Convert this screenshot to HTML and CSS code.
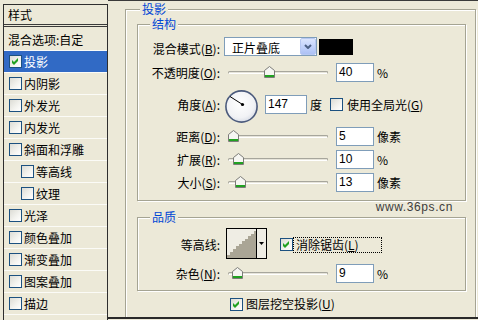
FILE: index.html
```html
<!DOCTYPE html>
<html lang="zh-CN">
<head>
<meta charset="utf-8">
<title>图层样式</title>
<link rel="stylesheet" href="styles.css">
</head>
<body>
<div class="dialog">
  <div class="styles">
    <div class="styles-head">样式</div>
    <div class="item item-blend">混合选项:自定</div>
    <div class="item selected"><span class="cb"><svg width="11" height="11" viewBox="0 0 11 11"><polygon points="2,4 4,6 8,2 8,5 4,9 2,7" fill="#21a121"/></svg></span><span>投影</span></div>
    <div class="item"><span class="cb"></span><span>内阴影</span></div>
    <div class="item"><span class="cb"></span><span>外发光</span></div>
    <div class="item"><span class="cb"></span><span>内发光</span></div>
    <div class="item"><span class="cb"></span><span>斜面和浮雕</span></div>
    <div class="item sub"><span class="cb"></span><span>等高线</span></div>
    <div class="item sub"><span class="cb"></span><span>纹理</span></div>
    <div class="item"><span class="cb"></span><span>光泽</span></div>
    <div class="item"><span class="cb"></span><span>颜色叠加</span></div>
    <div class="item"><span class="cb"></span><span>渐变叠加</span></div>
    <div class="item"><span class="cb"></span><span>图案叠加</span></div>
    <div class="item"><span class="cb"></span><span>描边</span></div>
  </div>

  <div class="main">
    <fieldset class="group outer">
      <legend>投影</legend>

      <fieldset class="group inner struct">
        <legend>结构</legend>

        <div class="row r-blend">
          <label class="lbl">混合模式(<u>B</u>):</label>
          <div class="ctrls">
            <div class="select"><span class="sel-text">正片叠底</span><span class="sel-btn"><svg width="8" height="5" viewBox="0 0 8 5"><polyline points="1,1 4,4 7,1" fill="none" stroke="#4d6185" stroke-width="2"/></svg></span></div>
            <div class="swatch"></div>
          </div>
        </div>

        <div class="row r-opacity">
          <label class="lbl">不透明度(<u>O</u>):</label>
          <div class="ctrls">
            <div class="slider"><div class="track"></div><svg class="thumb" style="left:40px" width="11" height="12" viewBox="0 0 11 12"><path d="M0.5 4.5 L5.5 0.5 L10.5 4.5 L10.5 11.5 L0.5 11.5 Z" fill="#f6f6f2" stroke="#7c7c78"/><rect x="1" y="9" width="9" height="2" fill="#21a121"/></svg></div>
            <div class="num">40</div><span class="unit">%</span>
          </div>
        </div>

        <div class="row r-angle">
          <label class="lbl">角度(<u>A</u>):</label>
          <div class="ctrls">
            <svg class="dial" width="33" height="33" viewBox="0 0 33 33">
              <defs><radialGradient id="dg" cx="45%" cy="40%" r="65%"><stop offset="0" stop-color="#ffffff"/><stop offset="0.7" stop-color="#f1f2f5"/><stop offset="1" stop-color="#d3d8e3"/></radialGradient></defs>
              <circle cx="16.5" cy="16.5" r="15.6" fill="url(#dg)" stroke="#4b5a7c" stroke-width="1.6"/>
              <line x1="17.5" y1="14.5" x2="5" y2="6.5" stroke="#000" stroke-width="1"/>
              <circle cx="17.5" cy="14.5" r="1.6" fill="#000"/>
            </svg>
            <div class="angle-rest">
              <div class="num wide">147</div><span class="unit">度</span>
              <span class="cb global"></span><span class="cb-text">使用全局光(<u>G</u>)</span>
            </div>
          </div>
        </div>

        <div class="row">
          <label class="lbl">距离(<u>D</u>):</label>
          <div class="ctrls">
            <div class="slider"><div class="track"></div><svg class="thumb" style="left:4px" width="11" height="12" viewBox="0 0 11 12"><path d="M0.5 4.5 L5.5 0.5 L10.5 4.5 L10.5 11.5 L0.5 11.5 Z" fill="#f6f6f2" stroke="#7c7c78"/><rect x="1" y="9" width="9" height="2" fill="#21a121"/></svg></div>
            <div class="num">5</div><span class="unit">像素</span>
          </div>
        </div>

        <div class="row">
          <label class="lbl">扩展(<u>R</u>):</label>
          <div class="ctrls">
            <div class="slider"><div class="track"></div><svg class="thumb" style="left:9px" width="11" height="12" viewBox="0 0 11 12"><path d="M0.5 4.5 L5.5 0.5 L10.5 4.5 L10.5 11.5 L0.5 11.5 Z" fill="#f6f6f2" stroke="#7c7c78"/><rect x="1" y="9" width="9" height="2" fill="#21a121"/></svg></div>
            <div class="num">10</div><span class="unit">%</span>
          </div>
        </div>

        <div class="row">
          <label class="lbl">大小(<u>S</u>):</label>
          <div class="ctrls">
            <div class="slider"><div class="track"></div><svg class="thumb" style="left:11px" width="11" height="12" viewBox="0 0 11 12"><path d="M0.5 4.5 L5.5 0.5 L10.5 4.5 L10.5 11.5 L0.5 11.5 Z" fill="#f6f6f2" stroke="#7c7c78"/><rect x="1" y="9" width="9" height="2" fill="#21a121"/></svg></div>
            <div class="num">13</div><span class="unit">像素</span>
          </div>
        </div>
      </fieldset>

      <fieldset class="group inner quality">
        <legend>品质</legend>

        <div class="row r-contour">
          <label class="lbl">等高线:</label>
          <div class="ctrls">
            <div class="contour">
              <svg class="cpreview" width="29" height="29" viewBox="0 0 29 29"><polygon points="0,29 0,26 3,26 3,23 6,23 6,20 9,20 9,17 12,17 12,15 15,15 15,12 18,12 18,10 21,10 21,7 24,7 24,5 27,5 27,2 29,2 29,29" fill="#aaa595"/></svg>
              <span class="cbtn"><svg width="5" height="3" viewBox="0 0 5 3"><path d="M0 0H5L2.5 3Z" fill="#000"/></svg></span>
            </div>
            <span class="cb aa"><svg width="11" height="11" viewBox="0 0 11 11"><polygon points="2,4 4,6 8,2 8,5 4,9 2,7" fill="#21a121"/></svg></span>
            <span class="focus">消除锯齿(<u>L</u>)</span>
          </div>
        </div>

        <div class="row r-noise">
          <label class="lbl">杂色(<u>N</u>):</label>
          <div class="ctrls">
            <div class="slider"><div class="track"></div><svg class="thumb" style="left:8px" width="11" height="12" viewBox="0 0 11 12"><path d="M0.5 4.5 L5.5 0.5 L10.5 4.5 L10.5 11.5 L0.5 11.5 Z" fill="#f6f6f2" stroke="#7c7c78"/><rect x="1" y="9" width="9" height="2" fill="#21a121"/></svg></div>
            <div class="num">9</div><span class="unit">%</span>
          </div>
        </div>
      </fieldset>

      <div class="knock">
        <span class="cb"><svg width="11" height="11" viewBox="0 0 11 11"><polygon points="2,4 4,6 8,2 8,5 4,9 2,7" fill="#21a121"/></svg></span>
        <span class="cb-text">图层挖空投影(<u>U</u>)</span>
      </div>
    </fieldset>

    <div class="watermark">www.36ps.cn</div>
  </div>
</div>
</body>
</html>
```

FILE: styles.css
```css
html, body {
  margin: 0;
  padding: 0;
}
body {
  width: 478px;
  height: 320px;
  overflow: hidden;
  background: #ece9d8;
  color: #000;
  font: 12px "Noto Sans CJK SC", "Noto Sans", sans-serif;
}
u { text-decoration: underline; text-underline-offset: 1px; }

.dialog {
  display: flex;
  width: 478px;
  height: 320px;
}

/* ---------- left style list ---------- */
.styles {
  flex: none;
  width: 105px;
  height: 316px;
  box-sizing: border-box;
  margin: 4px 0 0 3px;
  border: 1px solid #2e2e2e;
  border-bottom: 0;
}
.styles-head {
  height: 19px;
  line-height: 19px;
  padding-left: 4px;
  border-bottom: 3px double #3a3a3a;
}
.item {
  display: flex;
  align-items: center;
  gap: 2px;
  height: 21px;
  line-height: 21px;
  padding-left: 5px;
  border-bottom: 1px solid #fbfbf7;
  white-space: nowrap;
}
.item-blend {
  display: block;
  padding-left: 4px;
  padding-top: 2px;
}
.item.selected {
  background: #316ac5;
  color: #fff;
}
.item.sub { padding-left: 17px; }

/* checkbox */
.cb {
  flex: none;
  display: inline-flex;
  align-items: center;
  justify-content: center;
  width: 13px;
  height: 13px;
  box-sizing: border-box;
  border: 1px solid #1c5180;
  background: linear-gradient(135deg, #dcdcd5 0%, #f4f4f0 60%, #ffffff 100%);
}
.cb svg { display: block; }

/* ---------- right panel ---------- */
.main {
  flex: 1;
  position: relative;
  height: 319px;
  box-sizing: border-box;
  border-top: 1px solid #3a3a3a;
  border-bottom: 2px solid #2a2a2a;
  padding-left: 17px;
  overflow: hidden;
}
.group {
  margin: 0;
  padding: 0;
  min-width: 0;
  border: 1px solid #a5a493;
  box-shadow: inset 1px 1px 0 #fff, 1px 1px 0 #fff;
}
.group > legend {
  padding: 0 2px;
  line-height: 14px;
  color: #0046d5;
  background: #ece9d8;
}
.outer {
  margin: 1px 2px 0 0;
  height: 340px;
  box-sizing: border-box;
}
.outer > legend { margin-left: 14px; }
.inner { margin: 1px 9px 0 11px; }
.inner > legend { margin-left: 12px; }
.struct { padding-bottom: 8px; }
.quality { margin-top: 9px; padding-bottom: 7px; }

.row {
  display: grid;
  grid-template-columns: 82px 1fr;
  column-gap: 4px;
  align-items: center;
  height: 19px;
  margin-top: 4px;
}
.r-blend { margin-top: 6px; }
.r-opacity { margin-top: 7px; }
.r-angle { margin-top: 8px; height: 33px; }
.r-contour { margin-top: 4px; height: 31px; }
.r-noise { margin-top: 5px; }

.lbl {
  text-align: right;
  white-space: nowrap;
  line-height: 14px;
}
.r-blend .lbl { margin-top: 5px; }
.r-angle .lbl { margin-bottom: 4px; }
.r-contour .lbl { margin-top: 3px; }

.ctrls {
  display: flex;
  align-items: center;
  height: 100%;
  white-space: nowrap;
}

/* select */
.select {
  flex: none;
  display: flex;
  align-items: center;
  width: 93px;
  height: 19px;
  box-sizing: border-box;
  border: 1px solid #7f9db9;
  background: #fff;
}
.sel-text {
  flex: 1;
  padding: 3px 0 0 7px;
  line-height: 14px;
}
.sel-btn {
  display: flex;
  align-items: center;
  justify-content: center;
  width: 16px;
  height: 17px;
  box-sizing: border-box;
  border: 1px solid #b7c8f2;
  border-radius: 2px;
  background: linear-gradient(180deg, #dbe5fd 0%, #c3d3fb 50%, #adc1f4 100%);
}
.sel-btn svg { display: block; }
.swatch {
  flex: none;
  width: 34px;
  height: 16px;
  margin-left: 2px;
  background: #000;
}

/* slider */
.slider {
  flex: none;
  position: relative;
  display: flex;
  align-items: center;
  width: 108px;
  height: 19px;
}
.track {
  flex: 1;
  height: 1px;
  margin: 0 4px 1px;
  border: 1px solid #a7a69c;
  border-bottom-color: #ffffff;
  border-radius: 2px;
  background: #e6e4da;
}
.thumb {
  position: absolute;
  top: 3px;
  display: block;
}

/* numeric fields */
.num {
  flex: none;
  width: 38px;
  height: 19px;
  box-sizing: border-box;
  margin-left: 4px;
  padding-left: 2px;
  border: 1px solid #7f9db9;
  background: #fff;
  font: 12px "Liberation Sans", Arial, sans-serif;
  line-height: 17px;
}
.num.wide { width: 42px; margin-left: 7px; }
.unit { margin-left: 3px; line-height: 14px; }

/* angle */
.dial { flex: none; display: block; margin-left: 1px; }
.angle-rest {
  display: flex;
  align-items: center;
  margin-bottom: 4px;
}
.cb.global { margin-left: 8px; }
.cb-text { margin-left: 4px; line-height: 14px; }

/* contour */
.contour {
  flex: none;
  display: flex;
  width: 41px;
  height: 31px;
  box-sizing: border-box;
  margin-left: 2px;
  border: 1px solid #000;
  background: #efede4;
}
.cpreview {
  display: block;
  border-right: 1px solid #000;
}
.cbtn {
  flex: 1;
  display: flex;
  align-items: center;
  justify-content: center;
}
.cbtn svg { display: block; }
.cb.aa { margin-left: 13px; margin-top: 1px; }
.focus {
  width: 89px;
  height: 16px;
  box-sizing: border-box;
  margin-top: 2px;
  padding-left: 2px;
  border: 1px dotted #000;
  line-height: 14px;
}

/* knockout */
.knock {
  display: flex;
  align-items: center;
  height: 14px;
  margin: 6px 0 0 104px;
}
.knock .cb-text { margin-left: 3px; }

/* watermark */
.watermark {
  position: absolute;
  right: 25px;
  top: 199px;
  font: 12px "Liberation Sans", Arial, sans-serif;
  letter-spacing: 0.6px;
  line-height: 14px;
  color: #3c3c3c;
}
```
